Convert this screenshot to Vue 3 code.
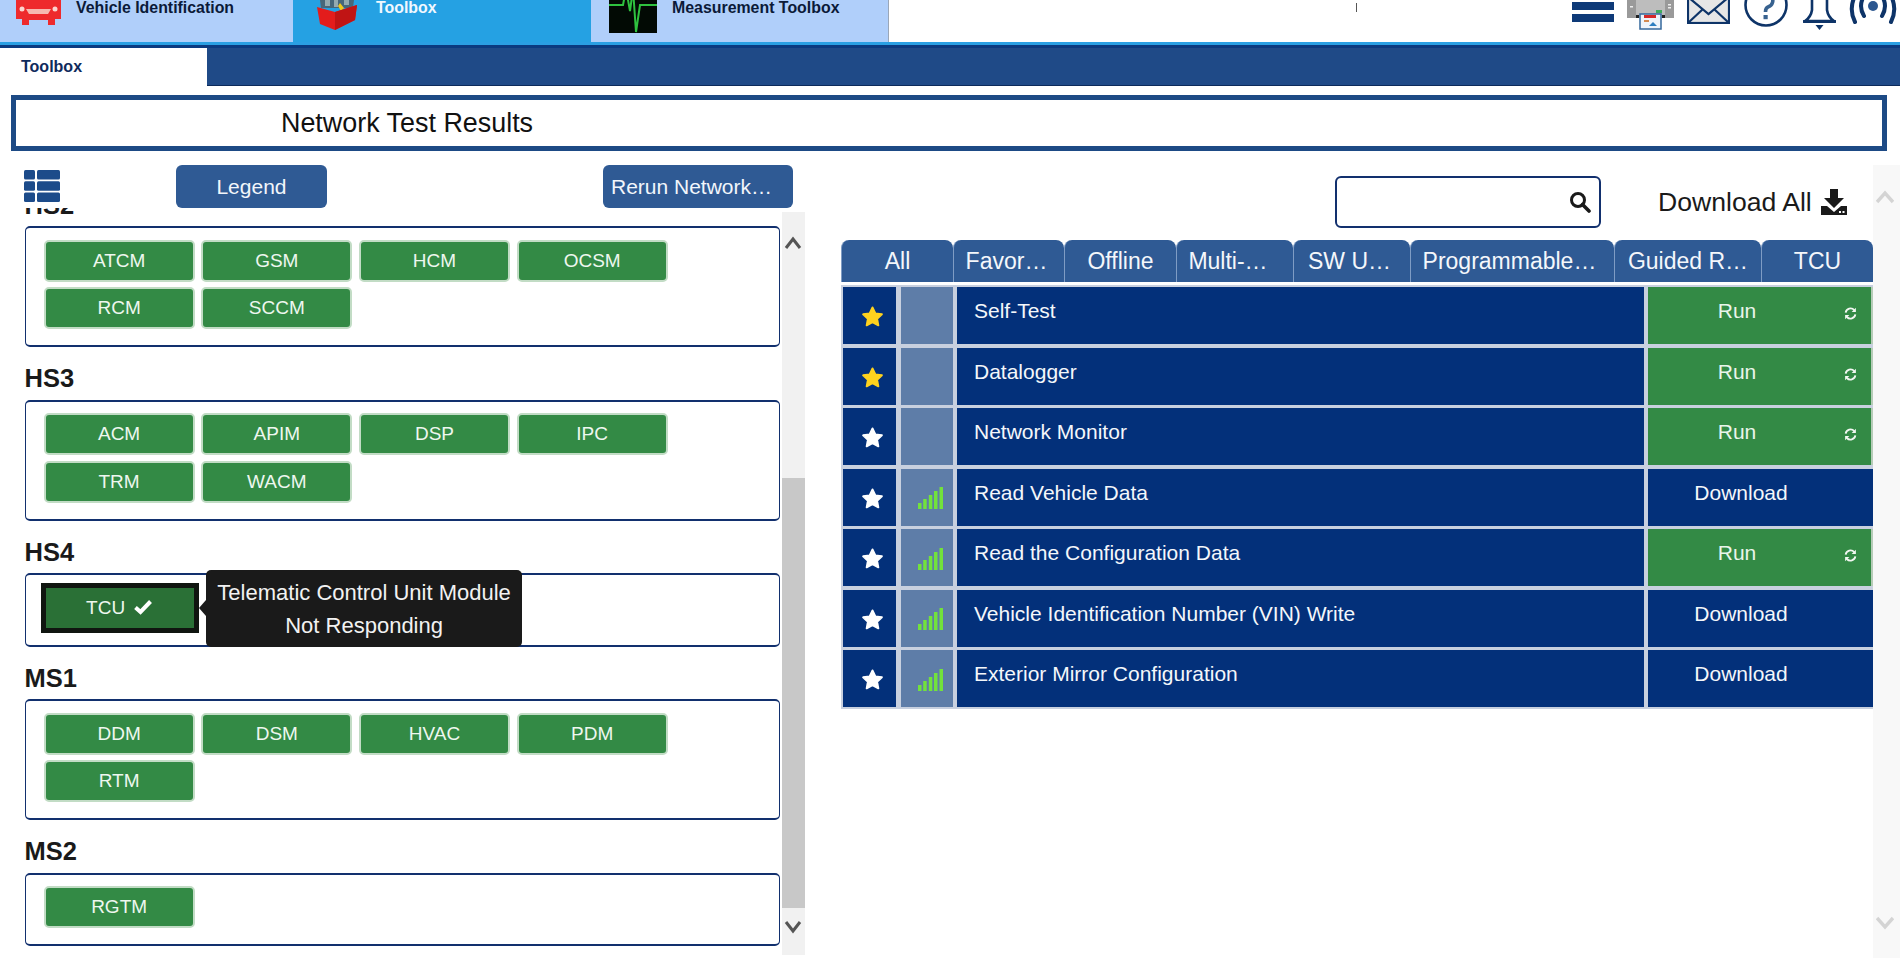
<script setup>
const groups = [
  { name: 'HS2', modules: ['ATCM', 'GSM', 'HCM', 'OCSM', 'RCM', 'SCCM'] },
  { name: 'HS3', modules: ['ACM', 'APIM', 'DSP', 'IPC', 'TRM', 'WACM'] },
  { name: 'HS4', modules: ['TCU'], selected: true },
  { name: 'MS1', modules: ['DDM', 'DSM', 'HVAC', 'PDM', 'RTM'] },
  { name: 'MS2', modules: ['RGTM'] }
]

const tabs = ['All', 'Favor…', 'Offline', 'Multi-…', 'SW U…', 'Programmable…', 'Guided R…', 'TCU']

const rows = [
  { name: 'Self-Test', fav: true, signal: false, action: 'Run' },
  { name: 'Datalogger', fav: true, signal: false, action: 'Run' },
  { name: 'Network Monitor', fav: false, signal: false, action: 'Run' },
  { name: 'Read Vehicle Data', fav: false, signal: true, action: 'Download' },
  { name: 'Read the Configuration Data', fav: false, signal: true, action: 'Run' },
  { name: 'Vehicle Identification Number (VIN) Write', fav: false, signal: true, action: 'Download' },
  { name: 'Exterior Mirror Configuration', fav: false, signal: true, action: 'Download' }
]
</script>

<template>
  <div class="page">
    <header class="top">
      <div class="app-tab">
        <svg class="car" viewBox="0 0 45 40" width="45" height="40">
          <path d="M8 0 L37 0 L41 11 L45 15 L45 34 L39 34 L39 40 L32 40 L32 35 L13 35 L13 40 L6 40 L6 34 L0 34 L0 15 L4 11 Z" fill="#ee2a2c" />
          <path d="M10 24 H35 L32 29 H13 Z" fill="#f6b9b0" />
          <circle cx="6" cy="24" r="2.5" fill="#fbd5cf" />
          <circle cx="39" cy="24" r="2.5" fill="#fbd5cf" />
        </svg>
        <span>Vehicle Identification</span>
      </div>
      <div class="app-tab app-tab--active">
        <svg class="box" viewBox="0 0 40 30" width="40" height="30">
          <path d="M3 0 H37 L36 8 H4 Z" fill="#47677a" />
          <path d="M8 0 h5 v6 h-5 Z M17 0 h4 v7 h-4 Z M27 0 h5 v5 h-5 Z" fill="#93aab0" />
          <path d="M23 3 l4 5 -3 3 -3 -5 Z" fill="#f2c71a" />
          <path d="M0 7 L18 12 L40 5 L38 20 L18 30 L3 24 Z" fill="#e31c1c" />
          <path d="M18 12 L40 5 L38 20 L18 30 Z" fill="#c01414" />
        </svg>
        <span>Toolbox</span>
      </div>
      <div class="app-tab app-tab--last">
        <svg class="scope" viewBox="0 0 48 48" width="48" height="48">
          <rect width="48" height="48" fill="#020a04" />
          <path d="M0 20 H14 L17 4 L21 26 L24 4 L27 47 L31 20 H48" fill="none" stroke="#2fc23f" stroke-width="2" />
        </svg>
        <span>Measurement Toolbox</span>
      </div>
      <i class="tick"></i>
      <div class="top-icons">
        <div class="burger"><i></i><i></i></div>
        <svg viewBox="0 0 47 30" width="47" height="30">
          <rect x="0" y="0" width="47" height="18" fill="#bdbdbd" />
          <rect x="0" y="0" width="9" height="18" fill="#9a9a9a" />
          <rect x="38" y="0" width="9" height="18" fill="#9a9a9a" />
          <rect x="3" y="6" width="3" height="1.5" fill="#eee" />
          <rect x="41" y="4" width="3" height="1.5" fill="#eee" />
          <rect x="41" y="7" width="3" height="1.5" fill="#eee" />
          <rect x="29" y="10" width="6" height="3" fill="#3cab5c" />
          <rect x="9" y="15" width="3" height="3" fill="#222" />
          <rect x="35" y="15" width="3" height="3" fill="#222" />
          <rect x="13" y="14" width="21" height="15" fill="#eef4fa" stroke="#35689c" stroke-width="1.5" />
          <rect x="17" y="15" width="12" height="3" fill="#d42a2a" />
          <rect x="17" y="20" width="5" height="2" fill="#d48a50" />
          <path d="M22 26 l4 -4 4 4 Z" fill="#2d7ec0" />
        </svg>
        <svg viewBox="0 0 43 24" width="43" height="24">
          <rect x="1" y="-4" width="41" height="27" fill="#e6e6e6" stroke="#0e3468" stroke-width="2.2" />
          <path d="M1 -3 L21.5 14 L42 -3 M1 23 L16 9 M42 23 L27 9" fill="none" stroke="#0e3468" stroke-width="2.2" />
        </svg>
        <svg class="help" viewBox="0 0 44 28" width="44" height="28">
          <circle cx="22" cy="5" r="20.5" fill="none" stroke="#0e3468" stroke-width="2.6" />
          <path d="M16 -1 A6.5 6.5 0 1 1 24 7 Q21.5 8 21.5 12" fill="none" stroke="#38628f" stroke-width="3.6" />
          <rect x="19.5" y="15" width="4.2" height="4.2" fill="#38628f" />
        </svg>
        <svg class="bell" viewBox="0 0 33 30" width="33" height="30">
          <path d="M9 0 V10 Q8 17 2 21 H31 Q25 17 24 10 V0" fill="none" stroke="#0e3468" stroke-width="2.6" />
          <path d="M1 21.5 H32" stroke="#0e3468" stroke-width="3.2" stroke-linecap="round" />
          <path d="M12.5 25 H20.5 L16.5 30 Z" fill="#0e3468" />
        </svg>
        <svg viewBox="0 0 48 26" width="48" height="26">
          <circle cx="24" cy="6" r="5" fill="#2c5790" />
          <path d="M15 -4 Q9 6 15 16 M33 -4 Q39 6 33 16" fill="none" stroke="#0e3468" stroke-width="4" stroke-linecap="round" />
          <path d="M7 -6 Q-1 8 6 22 M41 -6 Q49 8 42 22" fill="none" stroke="#0e3468" stroke-width="4" stroke-linecap="round" />
        </svg>
      </div>
    </header>
    <div class="accent"></div>
    <nav class="subnav">
      <div class="subnav-tab">Toolbox</div>
    </nav>

    <div class="title">Network Test Results</div>

    <main class="main">
      <section class="left">
        <div class="left-tools">
          <svg class="list-icon" viewBox="0 0 36 32" width="36" height="32">
            <rect x="0" y="0" width="11" height="9.5" rx="1.5" />
            <rect x="13" y="0" width="23" height="9.5" rx="1.5" />
            <rect x="0" y="11.2" width="11" height="9.5" rx="1.5" />
            <rect x="13" y="11.2" width="23" height="9.5" rx="1.5" />
            <rect x="0" y="22.5" width="11" height="9.5" rx="1.5" />
            <rect x="13" y="22.5" width="23" height="9.5" rx="1.5" />
          </svg>
          <button class="tool-btn legend">Legend</button>
          <button class="tool-btn rerun">Rerun Network…</button>
        </div>

        <div class="list">
          <div class="list-scroll">
            <div v-for="group in groups" :key="group.name" class="group">
              <h3 class="group-name">{{ group.name }}</h3>
              <div class="group-box">
                <button
                  v-for="mod in group.modules"
                  :key="mod"
                  :class="['mod', { 'mod--selected': group.selected }]"
                >
                  {{ mod }}
                  <svg v-if="group.selected" class="check" viewBox="0 0 20 16" width="20" height="16">
                    <path d="M2.5 8.5 L7.5 13 L17.5 2.5" fill="none" stroke="#fff" stroke-width="4" />
                  </svg>
                </button>
                <div v-if="group.selected" class="tooltip">
                  Telematic Control Unit Module<br />Not Responding
                </div>
              </div>
            </div>
          </div>
          <div class="scrollbar">
            <div class="thumb"></div>
            <svg class="chev chev-up" viewBox="0 0 18 14" width="18" height="14">
              <path d="M2 12 L9 3 L16 12" fill="none" stroke="#555" stroke-width="3" />
            </svg>
            <svg class="chev chev-down" viewBox="0 0 18 14" width="18" height="14">
              <path d="M2 2 L9 11 L16 2" fill="none" stroke="#555" stroke-width="3" />
            </svg>
          </div>
        </div>
      </section>

      <section class="right">
        <div class="right-tools">
          <div class="search">
            <svg viewBox="0 0 22 22" width="22" height="22">
              <circle cx="9" cy="9" r="6.5" fill="none" stroke="#1a1a1a" stroke-width="3" />
              <path d="M13.5 13.5 L20 20" stroke="#1a1a1a" stroke-width="3.6" stroke-linecap="round" />
            </svg>
          </div>
          <div class="download-all">
            Download All
            <svg viewBox="0 0 26 26" width="26" height="26">
              <path d="M9 0 H17 V9 H23 L13 19 L3 9 H9 Z" fill="#1a1a1a" />
              <path d="M0 17 H6 L13 23 L20 17 H26 V26 H0 Z" fill="#1a1a1a" />
              <rect x="18" y="22" width="2" height="2" fill="#fff" />
              <rect x="21.5" y="22" width="2" height="2" fill="#fff" />
            </svg>
          </div>
        </div>

        <div class="tabs">
          <div v-for="tab in tabs" :key="tab" class="tab">{{ tab }}</div>
        </div>

        <div class="rows">
          <div v-for="row in rows" :key="row.name" class="row">
            <div class="cell cell-star">
              <svg viewBox="0 0 24 24" width="23" height="23">
                <path
                  d="M12 2.5 L15 8.8 L21.8 9.7 L16.8 14.4 L18.1 21.2 L12 17.9 L5.9 21.2 L7.2 14.4 L2.2 9.7 L9 8.8 Z"
                  :fill="row.fav ? '#ffd21e' : '#ffffff'"
                  :stroke="row.fav ? '#ffd21e' : '#ffffff'"
                  stroke-width="2"
                  stroke-linejoin="round"
                />
              </svg>
            </div>
            <div class="cell cell-signal">
              <svg v-if="row.signal" viewBox="0 0 25 22" width="25" height="22">
                <rect x="0" y="16" width="3.5" height="6" />
                <rect x="5.2" y="12" width="3.5" height="10" />
                <rect x="10.8" y="8" width="3.5" height="14" />
                <rect x="16" y="4" width="3.5" height="18" />
                <rect x="21.5" y="0" width="3.5" height="22" />
              </svg>
            </div>
            <div class="cell cell-name">{{ row.name }}</div>
            <div v-if="row.action === 'Run'" class="cell cell-run">
              <span class="run-label">Run</span>
              <svg class="refresh" viewBox="0 0 14 14" width="13" height="13">
                <path d="M1.8 6 A5.2 5.2 0 0 1 11 3.4" fill="none" stroke="#f2f7f2" stroke-width="2" />
                <path d="M12.8 0.8 V5.4 H8.2 Z" fill="#f2f7f2" />
                <path d="M12.2 8 A5.2 5.2 0 0 1 3 10.6" fill="none" stroke="#f2f7f2" stroke-width="2" />
                <path d="M1.2 13.2 V8.6 H5.8 Z" fill="#f2f7f2" />
              </svg>
            </div>
            <div v-else class="cell cell-download">Download</div>
          </div>
        </div>
      </section>

      <aside class="page-scroll">
        <svg class="page-chev-up" viewBox="0 0 18 14" width="18" height="14">
          <path d="M1 12 L9 3 L17 12" fill="none" stroke="#d4d4d4" stroke-width="3.4" />
        </svg>
        <svg class="page-chev-down" viewBox="0 0 18 14" width="18" height="14">
          <path d="M1 2 L9 11 L17 2" fill="none" stroke="#d4d4d4" stroke-width="3.4" />
        </svg>
      </aside>
    </main>
  </div>
</template>

<style>
body {
  margin: 0;
  background: #fff;
}
</style>

<style scoped>
.page {
  width: 1900px;
  height: 958px;
  overflow: hidden;
  font-family: "Liberation Sans", Arial, sans-serif;
  background: #fff;
}

/* top bar */
.top {
  display: flex;
  height: 42px;
  overflow: hidden;
}

.app-tab {
  display: flex;
  width: 298px;
  height: 42px;
  box-sizing: border-box;
  padding-left: 16px;
  background: #b0cffa;
  color: #0b1a38;
  font-size: 15.9px;
  font-weight: 700;
  overflow: hidden;
}

.app-tab:first-child {
  width: 293px;
}

.app-tab span {
  line-height: 16px;
}

.app-tab--active {
  background: #25a1e3;
  color: #f0f8ff;
  padding-left: 24px;
}

.app-tab--last {
  padding-left: 18px;
  border-right: 1px solid #9aa7b8;
}

.car {
  margin: -15px 15px 0 0;
}

.box {
  margin: 0 19px 0 0;
}

.scope {
  margin: -15px 15px 0 0;
}

.tick {
  width: 1px;
  height: 9px;
  margin: 3px 0 0 467px;
  background: #555;
}

.top-icons {
  display: flex;
  align-items: flex-start;
  gap: 13px;
  margin-left: 215px;
}

.help {
  margin-left: 1px;
}

.bell {
  margin-left: 2px;
}

.burger {
  display: flex;
  flex-direction: column;
  gap: 4px;
  width: 42px;
  padding-top: 2px;
}

.burger i {
  display: block;
  height: 8px;
  background: #0e3a78;
}

.accent {
  height: 3px;
  background: #2a9fe3;
  border-bottom: 3px solid #0b3a80;
}

.subnav {
  height: 37px;
  background: #1f4a87;
  border-bottom: 1px solid #0c2a5a;
}

.subnav-tab {
  width: 186px;
  height: 38px;
  padding-left: 21px;
  background: #fff;
  color: #0e2a5c;
  font-size: 16px;
  font-weight: 700;
  line-height: 38px;
}

.title {
  height: 46px;
  margin: 9px 13px 0 11px;
  padding-left: 265px;
  border: 5px solid #1d4a85;
  color: #111;
  font-size: 26.9px;
  line-height: 46px;
}

/* layout */
.main {
  display: flex;
  margin-top: 14px;
}

.left {
  width: 841px;
  padding-left: 24.6px;
  box-sizing: border-box;
}

.left-tools {
  display: flex;
  height: 43px;
}

.list-icon {
  margin-top: 5px;
  margin-left: -1px;
  fill: #1c4b8a;
}

.tool-btn {
  height: 43px;
  border: none;
  border-radius: 6px;
  background: #2f5a94;
  color: #f2f6fb;
  font-family: inherit;
  font-size: 21px;
  padding: 0;
}

.legend {
  width: 151px;
  margin-left: 116.4px;
}

.rerun {
  width: 190px;
  margin-left: 276px;
  padding-left: 8px;
  text-align: left;
  white-space: nowrap;
}

.list {
  display: flex;
  height: 747px;
}

.list-scroll {
  width: 755px;
  height: 747px;
  overflow: hidden;
}

.group:first-child {
  margin-top: -34.5px;
}

.group-name {
  height: 27px;
  margin: 0;
  padding: 18px 0 7.5px;
  color: #1a1a1a;
  font-size: 25.5px;
  font-weight: 700;
  line-height: 27px;
}

.group-box {
  position: relative;
  display: flex;
  flex-wrap: wrap;
  gap: 5.5px 6.7px;
  padding: 11.5px 0 16px 18px;
  border-style: solid;
  border-color: #12306e;
  border-width: 2px 1.5px;
  border-radius: 5px;
}

.mod {
  width: 151px;
  height: 42px;
  box-sizing: border-box;
  border: 2px solid #c2dcc5;
  border-radius: 5px;
  background: #338a45;
  color: #eef7ef;
  font-family: inherit;
  font-size: 19px;
  padding: 0;
}

.mod--selected {
  display: flex;
  align-items: center;
  justify-content: center;
  gap: 8px;
  width: 158px;
  height: 50px;
  margin: -4px -4px -4px -3px;
  border: 5px solid #101510;
  border-radius: 0;
  background: #2a7036;
}

.check {
  margin-top: -2px;
}

.tooltip {
  position: absolute;
  top: -5px;
  left: 180.5px;
  z-index: 2;
  width: 316px;
  height: 77px;
  box-sizing: border-box;
  padding-top: 6px;
  border-radius: 5px;
  background: #1a1a1a;
  color: #f2f2f2;
  font-size: 22px;
  line-height: 33px;
  text-align: center;
}

.tooltip::before {
  content: "";
  position: absolute;
  top: 30px;
  left: -7px;
  border-top: 8px solid transparent;
  border-bottom: 8px solid transparent;
  border-right: 7px solid #1a1a1a;
}

.scrollbar {
  position: relative;
  width: 23px;
  height: 743px;
  margin: 4px 0 0 2px;
  background: #f1f1f1;
}

.thumb {
  position: absolute;
  top: 266px;
  left: 0;
  right: 0;
  height: 430px;
  background: #c8c8c8;
}

.chev {
  position: absolute;
  left: 2px;
}

.chev-up {
  top: 24px;
}

.chev-down {
  top: 708px;
}

/* right side */
.right {
  width: 1032px;
}

.right-tools {
  display: flex;
  align-items: flex-start;
  height: 75px;
}

.search {
  display: flex;
  align-items: center;
  justify-content: flex-end;
  width: 266px;
  height: 52px;
  box-sizing: border-box;
  margin: 11px 0 0 494px;
  padding-right: 8px;
  border: 2px solid #12306e;
  border-radius: 6px;
}

.download-all {
  display: flex;
  align-items: center;
  gap: 9px;
  height: 52px;
  margin: 11px 0 0 57px;
  color: #1a1a1a;
  font-size: 26.6px;
  white-space: nowrap;
}

.tabs {
  display: grid;
  grid-template-columns: 112px 111px 112px 117px 117px 204px 147px 112px;
  height: 42px;
}

.tab {
  box-sizing: border-box;
  border-left: 1px solid #7f9cc4;
  border-radius: 8px 8px 0 0;
  background: #2f5a94;
  color: #f4f7fb;
  font-size: 23px;
  line-height: 42px;
  text-align: center;
  white-space: nowrap;
  overflow: hidden;
}

/* truncated labels sit left of centre */
.tab:nth-child(2) {
  padding-right: 5px;
}

.tab:nth-child(4) {
  padding-right: 14px;
}

.tab:nth-child(5) {
  padding-right: 5px;
}

.tab:nth-child(6) {
  padding-right: 6px;
}

.rows {
  display: flex;
  flex-direction: column;
  gap: 3.5px;
  margin-top: 3px;
  padding: 2px 0 1.5px 2px;
  background: #c8d0df;
}

.row {
  display: grid;
  grid-template-columns: 54px 52px 687px 225px;
  column-gap: 4px;
  height: 57px;
}

.cell {
  box-sizing: border-box;
  height: 57px;
  background: #03307a;
  color: #f4f7fb;
  font-size: 21px;
  line-height: 24px;
}

.cell-star {
  padding: 18px 0 0 17.5px;
  margin-right: 1px;
}

.cell-signal {
  padding: 18.5px 0 0 17px;
  background: #5e7da8;
  fill: #72e23c;
}

.cell-name {
  padding: 12px 0 0 17px;
}

.cell-run {
  display: flex;
  align-items: flex-start;
  padding-top: 12px;
  border-right: 2px solid #b6ccb8;
  background: #338a45;
  color: #e9f5ea;
}

.run-label {
  width: 178px;
  text-align: center;
}

.refresh {
  margin: 8px 0 0 18px;
}

.cell-download {
  padding: 12px 39px 0 0;
  text-align: center;
}

.page-scroll {
  position: relative;
  width: 27px;
  height: 793px;
  background: #f8f8f8;
}

.page-chev-up {
  position: absolute;
  top: 25px;
  left: 3px;
}

.page-chev-down {
  position: absolute;
  top: 751px;
  left: 3px;
}
</style>
